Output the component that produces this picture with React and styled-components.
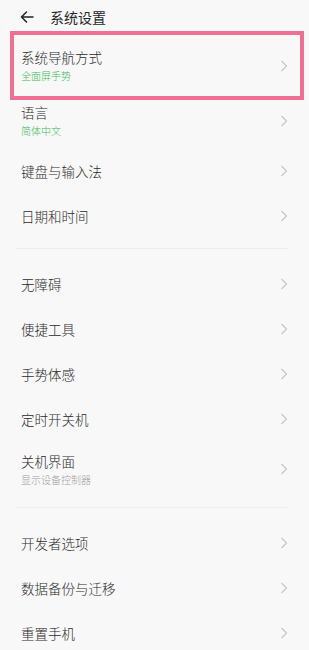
import React from "react";
import styled, { createGlobalStyle } from "styled-components";

const Global = createGlobalStyle`
  html, body { margin: 0; padding: 0; background: #f8f8f8; }
  body { font-family: "Noto Sans CJK SC", "Noto Sans", sans-serif; color: #1f1f1f; }
`;

const Page = styled.div`
  width: 309px;
  height: 650px;
  overflow: hidden;
  background: #f8f8f8;
`;

const Header = styled.div`
  height: 38px;
  display: flex;
  align-items: center;
  padding: 0 0 4px 20px;
  box-sizing: border-box;
  gap: 16px;
`;

const Title = styled.div`
  font-size: 14px;
  color: #262626;
  line-height: 1;
`;

const Group = styled.div`
  display: flex;
  flex-direction: column;
`;

const Divider = styled.div`
  height: 1px;
  background: #ececec;
  margin: 10px 21px 12.5px 16px;
`;

const RowWrap = styled.div`
  position: relative;
`;

const Row = styled.div`
  height: ${(p) => (p.$sub ? 55 : 45)}px;
  display: flex;
  align-items: center;
  justify-content: space-between;
  padding: 0 21px 0 21px;
  box-sizing: border-box;
`;

const Texts = styled.div`
  display: flex;
  flex-direction: column;
  gap: 4px;
`;

const Label = styled.div`
  font-size: 13.5px;
  line-height: 16px;
  color: #2a2a2a;
  font-weight: 300;
`;

const Sub = styled.div`
  font-size: 10px;
  line-height: 13px;
  font-weight: 300;
  color: ${(p) => (p.$green ? "#3dba5c" : "#a0a0a0")};
`;

const Highlight = styled.div`
  position: absolute;
  top: -7px;
  bottom: -7px;
  left: 10px;
  right: 5px;
  border: 4px solid #f06f95;
  pointer-events: none;
`;

const Chevron = () => (
  <svg width="8" height="12" viewBox="0 0 8 12">
    <path d="M1.5 1 L6.5 6 L1.5 11" fill="none" stroke="#c4c4c4" strokeWidth="1.1" />
  </svg>
);

const BackArrow = () => (
  <svg width="14" height="12" viewBox="0 0 14 12">
    <path d="M13 6 H1.5 M6.5 1 L1.5 6 L6.5 11" fill="none" stroke="#222" strokeWidth="1.5" strokeLinecap="round" strokeLinejoin="round" />
  </svg>
);

const Item = ({ label, sub, green }) => (
  <Row $sub={!!sub}>
    <Texts>
      <Label>{label}</Label>
      {sub && <Sub $green={green}>{sub}</Sub>}
    </Texts>
    <Chevron />
  </Row>
);

export default function App() {
  return (
    <Page>
      <Global />
      <Header>
        <BackArrow />
        <Title>系统设置</Title>
      </Header>
      <Group>
        <RowWrap>
          <Item label="系统导航方式" sub="全面屏手势" green />
          <Highlight />
        </RowWrap>
        <Item label="语言" sub="简体中文" green />
        <Item label="键盘与输入法" />
        <Item label="日期和时间" />
      </Group>
      <Divider />
      <Group>
        <Item label="无障碍" />
        <Item label="便捷工具" />
        <Item label="手势体感" />
        <Item label="定时开关机" />
        <Item label="关机界面" sub="显示设备控制器" />
      </Group>
      <Divider />
      <Group>
        <Item label="开发者选项" />
        <Item label="数据备份与迁移" />
        <Item label="重置手机" />
      </Group>
    </Page>
  );
}
